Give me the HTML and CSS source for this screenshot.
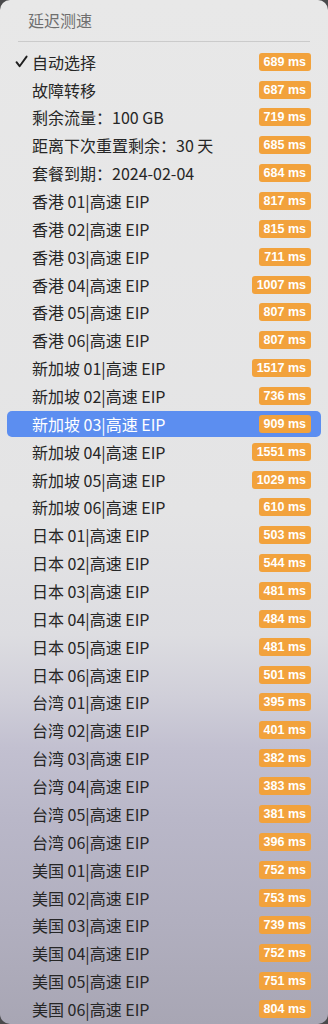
FILE: index.html
```html
<!DOCTYPE html>
<html lang="zh-CN">
<head>
    <meta charset="UTF-8">
    <title>延迟测速</title>
    <meta name="viewport" content="width=device-width, initial-scale=1.0">
    <link rel="stylesheet" href="styles.css">
</head>
<body>
    <div class="menu">
        <div class="menu-title">延迟测速</div>
        <div class="separator"></div>
        <div class="menu-list">
            <div class="menu-item">
                <svg class="check" width="13" height="13" viewBox="0 0 13 13"><path d="M1.5 7.2 L4.6 11.2 L11.6 1.6" fill="none" stroke="#1f1f1f" stroke-width="1.9" stroke-linecap="round" stroke-linejoin="round"/></svg>
                <span class="label">自动选择</span><span class="badge">689 ms</span>
            </div>
            <div class="menu-item"><span class="label">故障转移</span><span class="badge">687 ms</span></div>
            <div class="menu-item"><span class="label">剩余流量：100 GB</span><span class="badge">719 ms</span></div>
            <div class="menu-item"><span class="label">距离下次重置剩余：30 天</span><span class="badge">685 ms</span></div>
            <div class="menu-item"><span class="label">套餐到期：2024-02-04</span><span class="badge">684 ms</span></div>
            <div class="menu-item"><span class="label">香港 01|高速 EIP</span><span class="badge">817 ms</span></div>
            <div class="menu-item"><span class="label">香港 02|高速 EIP</span><span class="badge">815 ms</span></div>
            <div class="menu-item"><span class="label">香港 03|高速 EIP</span><span class="badge">711 ms</span></div>
            <div class="menu-item"><span class="label">香港 04|高速 EIP</span><span class="badge">1007 ms</span></div>
            <div class="menu-item"><span class="label">香港 05|高速 EIP</span><span class="badge">807 ms</span></div>
            <div class="menu-item"><span class="label">香港 06|高速 EIP</span><span class="badge">807 ms</span></div>
            <div class="menu-item"><span class="label">新加坡 01|高速 EIP</span><span class="badge">1517 ms</span></div>
            <div class="menu-item"><span class="label">新加坡 02|高速 EIP</span><span class="badge">736 ms</span></div>
            <div class="menu-item selected"><span class="label">新加坡 03|高速 EIP</span><span class="badge">909 ms</span></div>
            <div class="menu-item"><span class="label">新加坡 04|高速 EIP</span><span class="badge">1551 ms</span></div>
            <div class="menu-item"><span class="label">新加坡 05|高速 EIP</span><span class="badge">1029 ms</span></div>
            <div class="menu-item"><span class="label">新加坡 06|高速 EIP</span><span class="badge">610 ms</span></div>
            <div class="menu-item"><span class="label">日本 01|高速 EIP</span><span class="badge">503 ms</span></div>
            <div class="menu-item"><span class="label">日本 02|高速 EIP</span><span class="badge">544 ms</span></div>
            <div class="menu-item"><span class="label">日本 03|高速 EIP</span><span class="badge">481 ms</span></div>
            <div class="menu-item"><span class="label">日本 04|高速 EIP</span><span class="badge">484 ms</span></div>
            <div class="menu-item"><span class="label">日本 05|高速 EIP</span><span class="badge">481 ms</span></div>
            <div class="menu-item"><span class="label">日本 06|高速 EIP</span><span class="badge">501 ms</span></div>
            <div class="menu-item"><span class="label">台湾 01|高速 EIP</span><span class="badge">395 ms</span></div>
            <div class="menu-item"><span class="label">台湾 02|高速 EIP</span><span class="badge">401 ms</span></div>
            <div class="menu-item"><span class="label">台湾 03|高速 EIP</span><span class="badge">382 ms</span></div>
            <div class="menu-item"><span class="label">台湾 04|高速 EIP</span><span class="badge">383 ms</span></div>
            <div class="menu-item"><span class="label">台湾 05|高速 EIP</span><span class="badge">381 ms</span></div>
            <div class="menu-item"><span class="label">台湾 06|高速 EIP</span><span class="badge">396 ms</span></div>
            <div class="menu-item"><span class="label">美国 01|高速 EIP</span><span class="badge">752 ms</span></div>
            <div class="menu-item"><span class="label">美国 02|高速 EIP</span><span class="badge">753 ms</span></div>
            <div class="menu-item"><span class="label">美国 03|高速 EIP</span><span class="badge">739 ms</span></div>
            <div class="menu-item"><span class="label">美国 04|高速 EIP</span><span class="badge">752 ms</span></div>
            <div class="menu-item"><span class="label">美国 05|高速 EIP</span><span class="badge">751 ms</span></div>
            <div class="menu-item"><span class="label">美国 06|高速 EIP</span><span class="badge">804 ms</span></div>
        </div>
    </div>
</body>
</html>
```

FILE: styles.css
```css
:root {
    --menu-text: #262626;
    --menu-title: #6f6f6f;
    --badge-bg: #f2a23c;
    --select-bg: #5c8ef0;
}
html, body {
    margin: 0;
    height: 100%;
}
body {
    background: #4a4a4c;
    font-family: "Noto Sans CJK SC", "Noto Sans", sans-serif;
    overflow: hidden;
}
.menu {
    height: 1024px;
    border-radius: 10px;
    overflow: hidden;
    background: linear-gradient(to bottom,
        #e8e8e8 0%,
        #e4e4e5 50%,
        #dddde1 62%,
        #d0cfd9 68%,
        #c2c0d0 73%,
        #b9b7c8 80%,
        #b1afbf 90%,
        #a8a6b4 100%);
}
.menu-title {
    padding: 8px 0 0 28px;
    height: 24px;
    line-height: 24px;
    font-size: 16px;
    color: var(--menu-title);
}
.separator {
    height: 1px;
    margin: 9px 18px 6.8px 18px;
    background: #cbcbcb;
}
/* flex column so the row gaps don't collapse */
.menu-list {
    display: flex;
    flex-direction: column;
    gap: 2px;
}
.menu-item {
    display: flex;
    align-items: center;
    height: 25.86px;
    margin: 0 7px;
    padding: 0 10px 0 25px;
    border-radius: 5px;
    color: var(--menu-text);
    font-size: 16px;
}
.menu-item .check {
    margin-left: -17px;
    margin-right: 4px;
    flex: none;
}
.menu-item .label {
    flex: 1;
    white-space: nowrap;
}
.menu-item.selected {
    background: var(--select-bg);
    color: #fff;
}
.badge {
    height: 18px;
    line-height: 18px;
    padding: 0 5px;
    border-radius: 3px;
    background: var(--badge-bg);
    color: #fff;
    font-family: "Liberation Sans", Arial, sans-serif;
    font-weight: bold;
    font-size: 12.5px;
}
```
